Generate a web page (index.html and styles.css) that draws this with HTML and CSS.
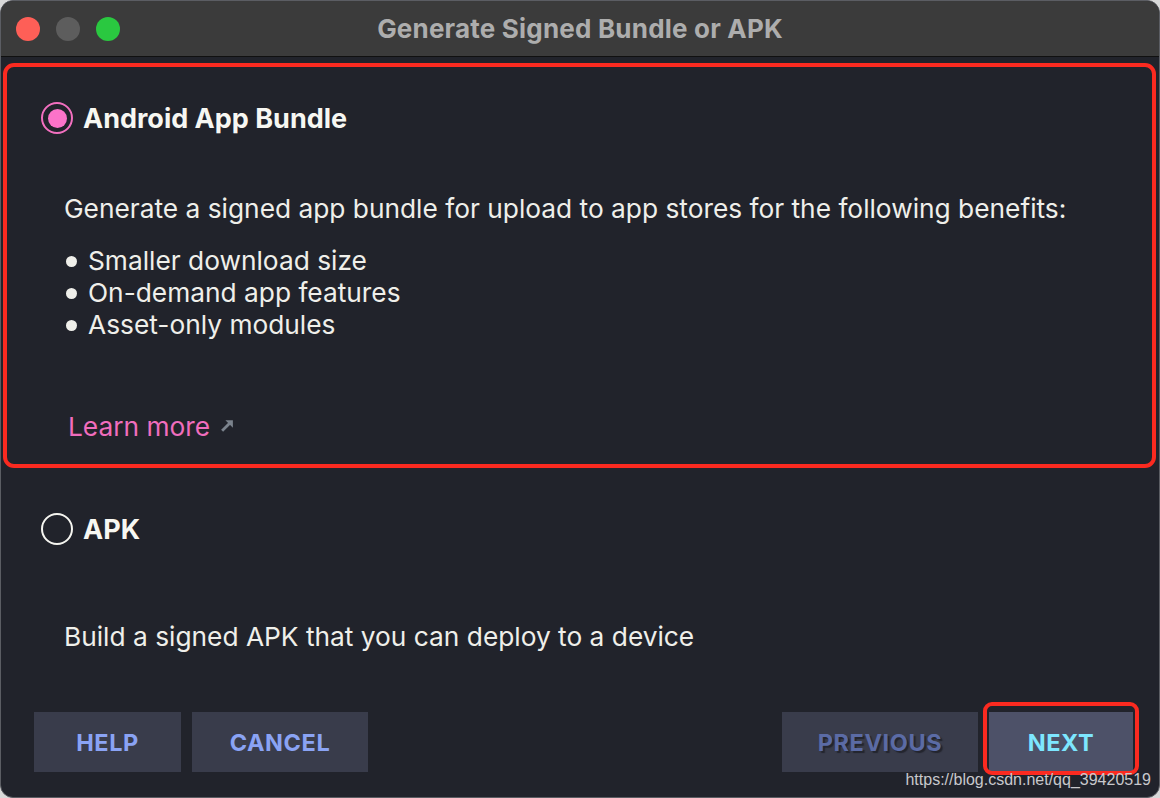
FILE: index.html
```html
<!DOCTYPE html>
<html>
<head>
<meta charset="utf-8">
<link rel="stylesheet" href="styles.css">
</head>
<body>
<div class="window">
  <div class="titlebar">
    <div class="lights">
      <span class="light red"></span>
      <span class="light gray"></span>
      <span class="light green"></span>
    </div>
    <div class="title">Generate Signed Bundle or APK</div>
  </div>
  <div class="content">
    <section class="option selected">
      <div class="option-head">
        <span class="radio checked"></span>
        <span class="option-label">Android App Bundle</span>
      </div>
      <p class="desc">Generate a signed app bundle for upload to app stores for the following benefits:</p>
      <ul class="benefits">
        <li>Smaller download size</li>
        <li>On-demand app features</li>
        <li>Asset-only modules</li>
      </ul>
      <a class="learn">Learn more <svg class="ext" width="15" height="15" viewBox="0 0 14 14"><path d="M2 12 L10 4" stroke="#7b838d" stroke-width="2.6"/><path d="M5 2 H12 V9 Z" fill="#7b838d"/></svg></a>
    </section>
    <section class="option apk">
      <div class="option-head">
        <span class="radio"></span>
        <span class="option-label">APK</span>
      </div>
      <p class="desc apk-desc">Build a signed APK that you can deploy to a device</p>
    </section>
    <div class="buttons">
      <div class="group">
        <button class="btn help">HELP</button>
        <button class="btn cancel">CANCEL</button>
      </div>
      <div class="group">
        <button class="btn prev">PREVIOUS</button>
        <button class="btn next">NEXT</button>
      </div>
    </div>
    <div class="watermark">https://blog.csdn.net/qq_39420519</div>
  </div>
</div>
</body>
</html>
```
FILE: styles.css
```css
* { box-sizing: border-box; }
html, body { margin: 0; padding: 0; }
body {
  width: 1160px;
  height: 798px;
  background: #d9d9d9;
  font-family: Inter, "Noto Sans", sans-serif;
  overflow: hidden;
}
.window {
  width: 1160px;
  height: 798px;
  border-radius: 13px;
  border: 1px solid #5b5d63;
  background: #21232b;
  overflow: hidden;
  display: flex;
  flex-direction: column;
  position: relative;
}
.titlebar {
  height: 56px;
  flex: none;
  background: #3b3b3b;
  border-bottom: 1px solid #101010;
  display: flex;
  align-items: center;
  position: relative;
}
.lights {
  display: flex;
  gap: 16px;
  padding-left: 15px;
}
.light {
  width: 24px;
  height: 24px;
  border-radius: 50%;
  display: block;
}
.light.red { background: #fe5f57; }
.light.gray { background: #5d5d5d; }
.light.green { background: #2ac840; }
.title {
  position: absolute;
  left: 0;
  right: 0;
  text-align: center;
  color: #adadad;
  font-weight: 700;
  font-size: 26px;
  letter-spacing: 0.2px;
}
.content {
  flex: 1;
  display: flex;
  flex-direction: column;
  position: relative;
}
.option.selected {
  margin: 6px 3px 0 2px;
  border: 4px solid #fb2a20;
  border-radius: 11px;
  padding: 35px 0 21px 34px;
}
.option-head {
  display: flex;
  align-items: center;
  height: 32px;
  gap: 10px;
}
.radio {
  width: 32px;
  height: 32px;
  border-radius: 50%;
  border: 2px solid #f5f5f0;
  display: flex;
  align-items: center;
  justify-content: center;
  flex: none;
}
.radio.checked {
  border-color: #f26fbf;
}
.radio.checked::before {
  content: "";
  width: 19px;
  height: 19px;
  border-radius: 50%;
  background: #fc73c9;
}
.option-label {
  color: #f7f7f2;
  font-weight: 700;
  font-size: 27px;
}
.desc {
  margin: 59px 0 0 23px;
  color: #efefea;
  font-size: 26.3px;
  line-height: 32px;
}
.benefits {
  margin: 20px 0 0 23px;
  padding: 0;
  list-style: none;
  color: #efefea;
  font-size: 26.3px;
  line-height: 32px;
}
.benefits li {
  display: flex;
  align-items: center;
}
.benefits li::before {
  content: "";
  width: 11px;
  height: 11px;
  border-radius: 50%;
  background: #efefea;
  margin: 0 11px 0 2px;
}
.learn {
  display: flex;
  align-items: center;
  gap: 10px;
  margin: 70px 0 0 27px;
  color: #f06dbd;
  font-size: 26.3px;
  line-height: 32px;
}
.ext { margin-top: -3px; }
.option.apk {
  padding: 45px 0 0 40px;
}
.apk-desc {
  margin: 76px 0 0 23px;
}
.buttons {
  margin-top: 59px;
  padding: 0 26px 0 33px;
  display: flex;
  justify-content: space-between;
}
.group {
  display: flex;
  gap: 11px;
}
.btn {
  height: 60px;
  border: none;
  border-radius: 0;
  background: #393c4b;
  color: #8aa3f4;
  font-family: Inter, "Noto Sans", sans-serif;
  font-weight: 700;
  font-size: 23.5px;
  letter-spacing: 0.6px;
  padding: 0;
}
.help { width: 147px; }
.cancel { width: 176px; }
.prev {
  width: 196px;
  color: #5b6ba5;
  text-shadow: 2px 2px 1px #23252e;
}
.next {
  width: 144px;
  background: #4d5168;
  color: #7de6ff;
  position: relative;
}
.next::after {
  content: "";
  position: absolute;
  left: -6px;
  right: -6px;
  top: -10px;
  bottom: -3px;
  border: 4px solid #fb2a20;
  border-radius: 9px;
}
.watermark {
  position: absolute;
  right: 8px;
  bottom: 8px;
  font-family: "Liberation Sans", Arial, sans-serif;
  font-size: 16px;
  color: #c8c8cc;
}
```
